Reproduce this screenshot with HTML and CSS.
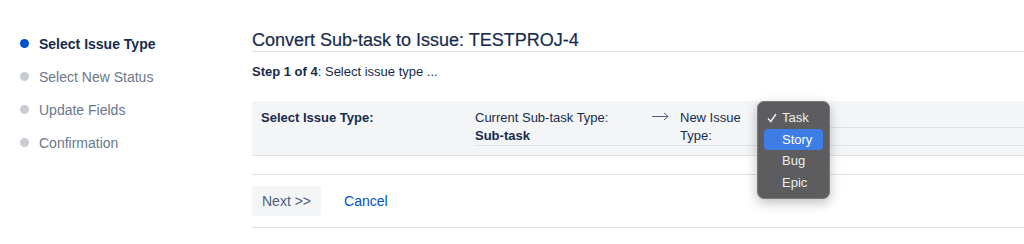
FILE: index.html
```html
<!DOCTYPE html>
<html lang="en">
  <head>
    <meta charset="UTF-8" />
    <title>Convert Sub-task to Issue</title>
    <link rel="stylesheet" href="styles.css">
  </head>
  <body>
    <div class="page">
      <ul class="steps">
        <li class="step active"><span class="dot"></span>Select Issue Type</li>
        <li class="step"><span class="dot"></span>Select New Status</li>
        <li class="step"><span class="dot"></span>Update Fields</li>
        <li class="step"><span class="dot"></span>Confirmation</li>
      </ul>

      <div class="content">
        <h1>Convert Sub-task to Issue: TESTPROJ-4</h1>
        <p class="step-info"><b>Step 1 of 4</b>: Select issue type ...</p>

        <div class="type-row">
          <div class="row-label">Select Issue Type:</div>
          <div class="row-fields">
            <div class="current">Current Sub-task Type:<br /><b>Sub-task</b></div>
            <div class="arrow">
              <svg width="17" height="9" viewBox="0 0 17 9">
                <path d="M0 4.5H16M12 1L16 4.5L12 8" fill="none" stroke="#505f79" stroke-width="1" />
              </svg>
            </div>
            <div class="new-label">New Issue Type:</div>
            <div class="select-cell"><div class="select-box"></div></div>
          </div>
          <!-- open native select menu -->
          <ul class="menu">
            <li class="menu-item checked">
              <svg class="check" width="10" height="10" viewBox="0 0 10 10">
                <path d="M1 5.5L3.8 8.5L9 1" fill="none" stroke="#ececec" stroke-width="1.5" />
              </svg>Task
            </li>
            <li class="menu-item selected">Story</li>
            <li class="menu-item">Bug</li>
            <li class="menu-item">Epic</li>
          </ul>
        </div>

        <div class="buttons">
          <button class="next-button">Next &gt;&gt;</button>
          <a class="cancel-link" href="#">Cancel</a>
        </div>
      </div>
    </div>
  </body>
</html>
```

FILE: styles.css
```css
* {
  margin: 0;
  padding: 0;
  box-sizing: border-box;
}

body {
  font-family: "Liberation Sans", Arial, sans-serif;
  font-size: 14px;
  color: #172b4d;
  background: #fff;
  width: 1024px;
  height: 244px;
  overflow: hidden;
}

.page {
  display: flex;
}

.steps {
  list-style: none;
  width: 252px;
  padding: 27px 0 0 20px;
}

.step {
  display: flex;
  align-items: center;
  height: 33px;
  color: #6b778c;
  font-size: 14px;
}

.step .dot {
  width: 9px;
  height: 9px;
  border-radius: 50%;
  background: #c9ccd1;
  margin-right: 10px;
}

.step.active {
  color: #172b4d;
  font-weight: 700;
}

.step.active .dot {
  background: #0052cc;
}

.content {
  flex: 1;
  padding-top: 29px;
}

h1 {
  font-size: 18px;
  font-weight: 400;
  line-height: 22px;
  border-bottom: 1px solid #dfe1e6;
  color: #172b4d;
  -webkit-text-stroke: 0.2px #172b4d;
}

.step-info {
  font-size: 13px;
  line-height: 16px;
  margin-top: 12px;
}

.type-row {
  position: relative;
  display: flex;
  margin-top: 21px;
  padding: 8px 0 9px 9px;
  background: #f4f5f7;
  border-bottom: 1px solid #dfe1e6;
  line-height: 18px;
  font-size: 13px;
}

.row-label {
  width: 214px;
  font-weight: 700;
}

.row-fields {
  flex: 1;
  display: flex;
  border-bottom: 1px solid #dfe1e6;
}

.current {
  width: 177px;
}

.arrow {
  width: 28px;
  padding-top: 3px;
}

.arrow svg {
  display: block;
}

.new-label {
  width: 77px;
}

.select-cell {
  flex: 1;
  margin-top: -8px;
}

.select-box {
  height: 27px;
  border-bottom: 1px solid #dfe1e6;
}

.menu {
  position: absolute;
  left: 505px;
  top: 0;
  width: 73px;
  padding: 5px 6px 5px;
  list-style: none;
  background: #5d5d60;
  border: 1px solid #7a7a7d;
  border-radius: 7px;
  box-shadow: 0 4px 12px rgba(0, 0, 0, 0.25);
  color: #ececec;
  font-size: 13px;
  z-index: 10;
}

.menu-item {
  position: relative;
  height: 21.5px;
  line-height: 21px;
  padding-left: 18px;
  border-radius: 4px;
}

.menu-item .check {
  position: absolute;
  left: 3px;
  top: 6px;
}

.menu-item.selected {
  background: #3f7de6;
  color: #fff;
}

.buttons {
  display: flex;
  align-items: center;
  margin-top: 18px;
  padding: 11px 0;
  border-top: 1px solid #dfe1e6;
  border-bottom: 1px solid #dfe1e6;
}

.next-button {
  height: 30px;
  padding: 0 10px;
  border: none;
  border-radius: 3px;
  background: #f4f5f7;
  color: #505f79;
  font-family: inherit;
  font-size: 14px;
}

.cancel-link {
  margin-left: 23px;
  color: #0052cc;
  text-decoration: none;
  font-size: 14px;
}
```
